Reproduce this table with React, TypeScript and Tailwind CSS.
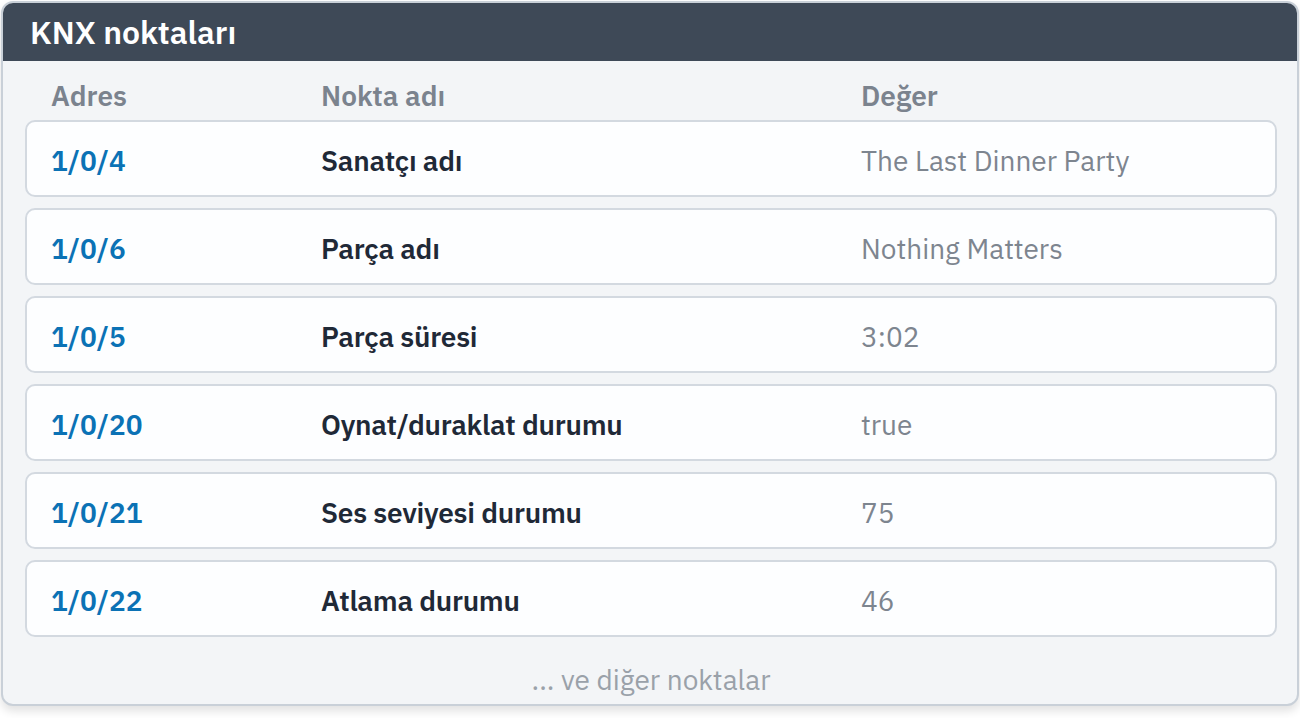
const rows = [
  { addr: '1/0/4', name: 'Sanatçı adı', value: 'The Last Dinner Party' },
  { addr: '1/0/6', name: 'Parça adı', value: 'Nothing Matters' },
  { addr: '1/0/5', name: 'Parça süresi', value: '3:02' },
  { addr: '1/0/20', name: 'Oynat/duraklat durumu', value: 'true' },
  { addr: '1/0/21', name: 'Ses seviyesi durumu', value: '75' },
  { addr: '1/0/22', name: 'Atlama durumu', value: '46' },
];

const font = { fontFamily: '"IBM Plex Sans", "Noto Sans", "Open Sans", sans-serif' };

export default function App() {
  return (
    <div className="w-[1300px] h-[718px] bg-white p-px" style={font}>
      <div className="h-[705px] rounded-xl border-2 border-[#c9d0d8] bg-[#f3f5f7] overflow-hidden flex flex-col shadow-[0_5px_10px_rgba(0,0,0,0.12)]">
        <header className="h-[58px] shrink-0 bg-[#3e4957] flex items-center px-[27px]">
          <h1 className="text-[32px] font-semibold text-white leading-none">KNX noktaları</h1>
        </header>

        <div className="pl-[22px] pr-[20px] flex flex-col">
          <div className="grid grid-cols-[270px_540px_1fr] px-[26px] pt-[19px] pb-[8px] text-[28px] leading-[32px] font-semibold text-[#7b838e]">
            <span>Adres</span>
            <span>Nokta adı</span>
            <span>Değer</span>
          </div>

          <div className="flex flex-col gap-[11px]">
            {rows.map((r) => (
              <div
                key={r.addr}
                className="h-[77px] rounded-[10px] border-2 border-[#d3d9e0] bg-[#fdfeff] grid grid-cols-[270px_540px_1fr] items-center px-6 pt-[4px] text-[28px] leading-[32px]"
              >
                <span className="font-semibold text-[#0b72b5]">{r.addr}</span>
                <span className="font-semibold text-[#1f2937] tracking-[-0.25px]">{r.name}</span>
                <span className="text-[#7d858f]">{r.value}</span>
              </div>
            ))}
          </div>

          <div className="pt-[27px] text-center text-[28px] leading-[32px] text-[#9aa1a9]">
            ... ve diğer noktalar
          </div>
        </div>
      </div>
    </div>
  );
}
